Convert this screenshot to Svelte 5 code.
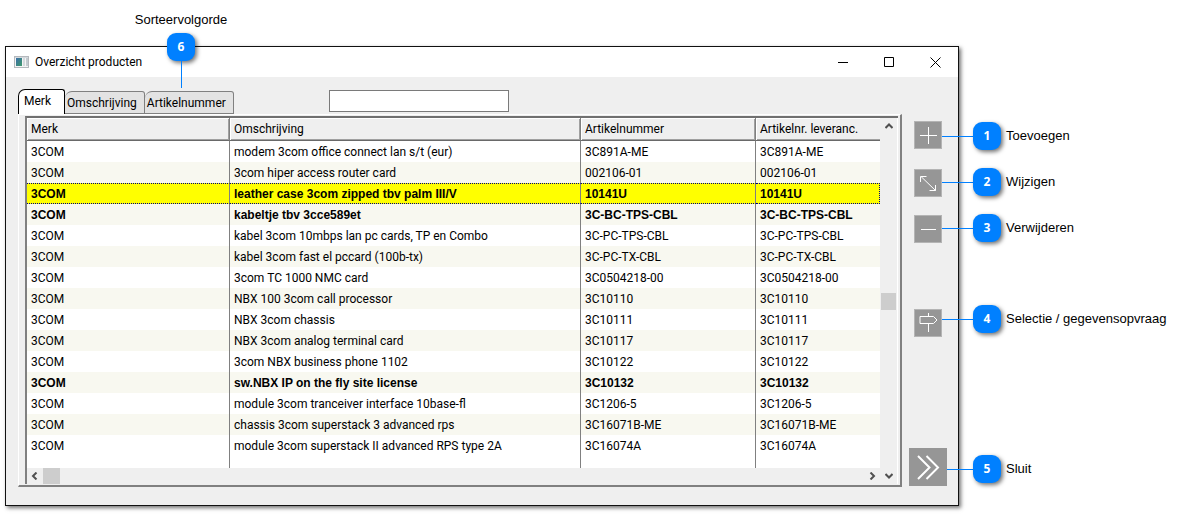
<script>
  const columns = ['Merk', 'Omschrijving', 'Artikelnummer', 'Artikelnr. leveranc.']
  const tabs = ['Merk', 'Omschrijving', 'Artikelnummer']

  const products = [
    { name: 'modem 3com office connect lan s/t (eur)', code: '3C891A-ME' },
    { name: '3com hiper access router card', code: '002106-01' },
    { name: 'leather case 3com zipped tbv palm III/V', code: '10141U', bold: true },
    { name: 'kabeltje tbv 3cce589et', code: '3C-BC-TPS-CBL', bold: true },
    { name: 'kabel 3com 10mbps lan pc cards, TP en Combo', code: '3C-PC-TPS-CBL' },
    { name: 'kabel 3com fast el pccard (100b-tx)', code: '3C-PC-TX-CBL' },
    { name: '3com TC 1000 NMC card', code: '3C0504218-00' },
    { name: 'NBX 100 3com call processor', code: '3C10110' },
    { name: 'NBX 3com chassis', code: '3C10111' },
    { name: 'NBX 3com analog terminal card', code: '3C10117' },
    { name: '3com NBX business phone 1102', code: '3C10122' },
    { name: 'sw.NBX IP on the fly site license', code: '3C10132', bold: true },
    { name: 'module 3com tranceiver interface 10base-fl', code: '3C1206-5' },
    { name: 'chassis 3com superstack 3 advanced rps', code: '3C16071B-ME' },
    { name: 'module 3com superstack II advanced RPS type 2A', code: '3C16074A' }
  ]

  const notes = ['Toevoegen', 'Wijzigen', 'Verwijderen', 'Selectie / gegevensopvraag', 'Sluit']

  let tab = $state('Merk')
  let selected = $state(2)
  let search = $state('')
</script>

<div class="page">
  <main class="window">
    <header class="titlebar">
      <svg class="app-icon" width="15" height="12" viewBox="0 0 15 12">
        <defs>
          <linearGradient id="pane" x1="0" y1="0" x2="1" y2="1">
            <stop offset="0" stop-color="#3b6ea8" />
            <stop offset="1" stop-color="#3f9a6b" />
          </linearGradient>
        </defs>
        <rect x=".5" y=".5" width="14" height="11" fill="#f4f4f4" stroke="#b4b8bc" />
        <rect x="1" y="1" width="13" height="1" fill="#d5d9dd" />
        <rect x="2" y="2" width="6" height="8" fill="url(#pane)" />
        <rect x="9" y="2" width="2" height="8" fill="#d4dadd" />
        <rect x="12" y="2" width="2" height="8" fill="#c4cbd0" />
      </svg>
      <h1>Overzicht producten</h1>
      <button class="caption" aria-label="Minimaliseren">
        <svg width="11" height="11" viewBox="0 0 11 11"><path d="M0 5.5h10" /></svg>
      </button>
      <button class="caption" aria-label="Maximaliseren">
        <svg width="11" height="11" viewBox="0 0 11 11"><path d="M.5 .5h9v9h-9z" /></svg>
      </button>
      <button class="caption" aria-label="Sluiten">
        <svg width="11" height="11" viewBox="0 0 11 11"><path d="M.5 .5l10 10M10.5 .5l-10 10" /></svg>
      </button>
    </header>

    <div class="body">
      <div class="content">
        <div class="toolbar">
          <div class="tabs" role="tablist">
            {#each tabs as name}
              <button class="tab" class:active={tab === name} role="tab" aria-selected={tab === name} onclick={() => (tab = name)}>{name}</button>
            {/each}
          </div>
          <input class="search" type="text" aria-label="Zoeken" bind:value={search} />
        </div>

        <div class="panel">
          <div class="grid">
            <div class="rows">
              <table>
                <colgroup>
                  <col class="brand" />
                  <col />
                  <col class="code" />
                  <col class="supplier" />
                </colgroup>
                <thead>
                  <tr>
                    {#each columns as column}
                      <th>{column}</th>
                    {/each}
                  </tr>
                </thead>
                <tbody>
                  {#each products as product, i}
                    <tr class:bold={product.bold} class:selected={selected === i} onclick={() => (selected = i)}>
                      <td>3COM</td>
                      <td>{product.name}</td>
                      <td>{product.code}</td>
                      <td>{product.code}</td>
                    </tr>
                  {/each}
                  <tr class="rest"><td></td><td></td><td></td><td></td></tr>
                </tbody>
              </table>
              <div class="hscroll">
                <button class="arrow" aria-label="Links">
                  <svg width="8" height="8" viewBox="0 0 8 8"><path d="M5.500 .5L2 4l3.500 3.500" /></svg>
                </button>
                <div class="thumb"></div>
                <button class="arrow last" aria-label="Rechts">
                  <svg width="8" height="8" viewBox="0 0 8 8"><path d="M2.500 .5L6 4L2.500 7.500" /></svg>
                </button>
              </div>
            </div>
            <div class="vscroll">
              <button class="arrow" aria-label="Omhoog">
                <svg width="8" height="8" viewBox="0 0 8 8"><path d="M.5 6L4 2.500L7.500 6" /></svg>
              </button>
              <div class="above"></div>
              <div class="thumb"></div>
              <div class="below"></div>
              <button class="arrow" aria-label="Omlaag">
                <svg width="8" height="8" viewBox="0 0 8 8"><path d="M.5 2L4 5.500L7.500 2" /></svg>
              </button>
            </div>
          </div>
        </div>
      </div>

      <div class="actions">
        <button class="action" aria-label="Toevoegen">
          <svg width="28" height="28" viewBox="0 0 28 28"><path d="M6 14.500h17M14.500 6v17" /></svg>
        </button>
        <button class="action edit" aria-label="Wijzigen">
          <svg width="28" height="28" viewBox="0 0 28 28"><path d="M7 7.500l14.500 14M6.500 13V7.500h6M21.500 16v5.500h-6" /></svg>
        </button>
        <button class="action remove" aria-label="Verwijderen">
          <svg width="28" height="28" viewBox="0 0 28 28"><path d="M7 14.500h15" /></svg>
        </button>
        <button class="action select" aria-label="Selectie">
          <svg width="28" height="28" viewBox="0 0 28 28"><path d="M14.500 4v3M14.500 14.500V23M6 7.500h13.500l3.500 3.500l-3.500 3.500H6z" /></svg>
        </button>
        <button class="action close" aria-label="Sluit">
          <svg width="38" height="38" viewBox="0 0 38 38"><path d="M9 8l11.500 11.500L9 31M17.500 8L29 19.500L17.500 31" /></svg>
        </button>
      </div>
    </div>
  </main>

  <ol class="notes">
    {#each notes as note, i}
      <li class="note note-{i + 1}">
        <span class="line"></span>
        <span class="badge">{i + 1}</span>
        <span>{note}</span>
      </li>
    {/each}
  </ol>

  <div class="sort-note">
    <span>Sorteervolgorde</span>
    <span class="badge">6</span>
    <span class="stem"></span>
  </div>
</div>

<style>
  :global(body) {
    background: #fff;
  }
  .page {
    position: relative;
    display: grid;
    grid-template-columns: minmax(0, 1fr) 220px;
    align-items: start;
    padding-left: 5px;
    font: 13px/16px 'Liberation Sans', Arial, sans-serif;
    color: #000;
  }
  button {
    padding: 0;
    border: 0;
    background: none;
    font: inherit;
    color: inherit;
  }
  svg {
    display: block;
    fill: none;
  }
  .window {
    margin: 46px 0 9px;
    border: 1px solid #111;
    background: #efefef;
    box-shadow: 2px 2px 4px rgba(0, 0, 0, .55);
    font-family: Roboto, 'Open Sans', sans-serif;
    font-size: 12px;
  }
  .titlebar {
    display: flex;
    align-items: center;
    height: 30px;
    padding-left: 8px;
    background: #fff;
  }
  h1 {
    flex: 1;
    margin: 0 0 0 6px;
    font-size: 12px;
    font-weight: 400;
  }
  .caption {
    display: flex;
    align-items: center;
    justify-content: center;
    width: 46px;
    height: 28px;
  }
  .caption svg {
    stroke: #000;
  }
  .body {
    display: flex;
  }
  .content {
    flex: 1;
    min-width: 0;
    padding: 12px 0 18px 12px;
  }
  .toolbar {
    display: flex;
    height: 25px;
  }
  .tabs {
    display: flex;
    align-items: flex-end;
    width: 311px;
  }
  .tab {
    height: 23px;
    padding: 0 7px 0 2px;
    border: 1px solid #808080;
    border-left-width: 0;
    border-radius: 7px 3px 0 0;
    background: #e3e3e3;
    white-space: nowrap;
  }
  .tab.active {
    width: 47px;
    height: 25px;
    padding: 0 8px 2px 5px;
    border: 1px solid #000;
    border-bottom: 0;
    border-radius: 7px 3px 0 0;
    background: #fff;
    text-align: left;
  }
  .search {
    box-sizing: border-box;
    width: 180px;
    height: 22px;
    margin: 1px 0 0;
    padding: 0 4px;
    border: 1px solid #7a7a7a;
    background: #fff;
    font: inherit;
  }
  .panel {
    padding: 1px 2px 1px 6px;
    border: 1px solid #fff;
    border-right: 2px solid #808080;
    border-bottom: 2px solid #808080;
  }
  .grid {
    display: flex;
    border-top: 2px solid #707070;
    border-left: 2px solid #808080;
  }
  .rows {
    flex: 1;
    min-width: 0;
    background: #fff;
  }
  table {
    width: 100%;
    table-layout: fixed;
    border-spacing: 0;
  }
  .brand {
    width: 203px;
  }
  .code {
    width: 175px;
  }
  .supplier {
    width: 124px;
  }
  th,
  td {
    box-sizing: border-box;
    padding: 0 0 0 4px;
    border-right: 1px solid #808080;
    overflow: hidden;
    text-align: left;
    white-space: nowrap;
  }
  th:last-child,
  td:last-child {
    border-right: 0;
  }
  th {
    height: 23px;
    border-bottom: 1px solid #696969;
    background: #efefef;
    box-shadow: inset 1px 1px #fff, inset -1px -1px #a0a0a0;
    font-weight: 400;
  }
  th:last-child {
    box-shadow: inset 1px 1px #fff, inset 0 -1px #a0a0a0;
  }
  td {
    height: 21px;
  }
  tbody tr:nth-child(even) td {
    background: #f8f8f0;
  }
  .bold td {
    font-family: 'Liberation Sans', Arial, sans-serif;
    font-weight: 700;
  }
  tbody .selected td {
    border-top: 1px dotted #000080;
    border-bottom: 1px dotted #000080;
    background: #ff0;
  }
  .selected td:last-child {
    border-right: 1px dotted #000080;
  }
  tbody tr.rest:last-child td {
    height: 12px;
    background: #fff;
  }
  .hscroll {
    display: flex;
    height: 16px;
    background: #efefef;
  }
  .vscroll {
    display: flex;
    flex-direction: column;
    width: 16px;
    padding-left: 1px;
    background: #efefef;
    border-right: 1px solid #fff;
  }
  .arrow {
    display: flex;
    align-items: center;
    justify-content: center;
    width: 16px;
    height: 16px;
  }
  .arrow svg {
    stroke: #505050;
    stroke-width: 2;
  }
  .last {
    margin-left: auto;
  }
  .thumb {
    width: 17px;
    background: #cdcdcd;
  }
  .vscroll .thumb {
    width: 15px;
    height: 17px;
  }
  .above {
    flex: 159;
  }
  .below {
    flex: 158;
  }
  .actions {
    display: flex;
    flex-direction: column;
    align-items: center;
    width: 52px;
    padding: 44px 4px 19px 0;
  }
  .action {
    box-sizing: border-box;
    width: 28px;
    height: 28px;
    background: #969696;
    box-shadow: inset 0 0 0 1px #b4b4b4;
  }
  .action svg {
    stroke: #fff;
  }
  .edit {
    margin-top: 20px;
  }
  .remove {
    margin-top: 18px;
  }
  .select {
    margin-top: 66px;
  }
  .close {
    width: 38px;
    height: 38px;
    margin-top: auto;
    box-shadow: none;
  }
  .close svg {
    stroke-width: 2;
  }
  .notes {
    z-index: 1;
    margin: 0 0 0 -17px;
    padding: 122px 0 0;
    list-style: none;
  }
  .note {
    display: flex;
    align-items: center;
    margin-bottom: 18px;
    white-space: nowrap;
  }
  .note-4 {
    margin-top: 63px;
  }
  .note-5 {
    margin-top: 122px;
    padding-left: 5px;
  }
  .line {
    width: 31px;
    height: 1px;
    background: #0080ff;
  }
  .note-5 .line {
    width: 26px;
  }
  .badge {
    width: 28px;
    margin-right: 5px;
    border-radius: 9px;
    background: #0080ff;
    box-shadow: 2px 2px 4px rgba(0, 0, 0, .55);
    color: #fff;
    font: 700 12px/28px 'Open Sans', sans-serif;
    text-align: center;
  }
  .sort-note {
    position: absolute;
    top: 12px;
    left: 131px;
    display: flex;
    flex-direction: column;
    align-items: center;
    width: 100px;
  }
  .sort-note .badge {
    margin: 5px 0 0;
  }
  .stem {
    width: 1px;
    height: 27px;
    background: #0080ff;
  }
</style>
